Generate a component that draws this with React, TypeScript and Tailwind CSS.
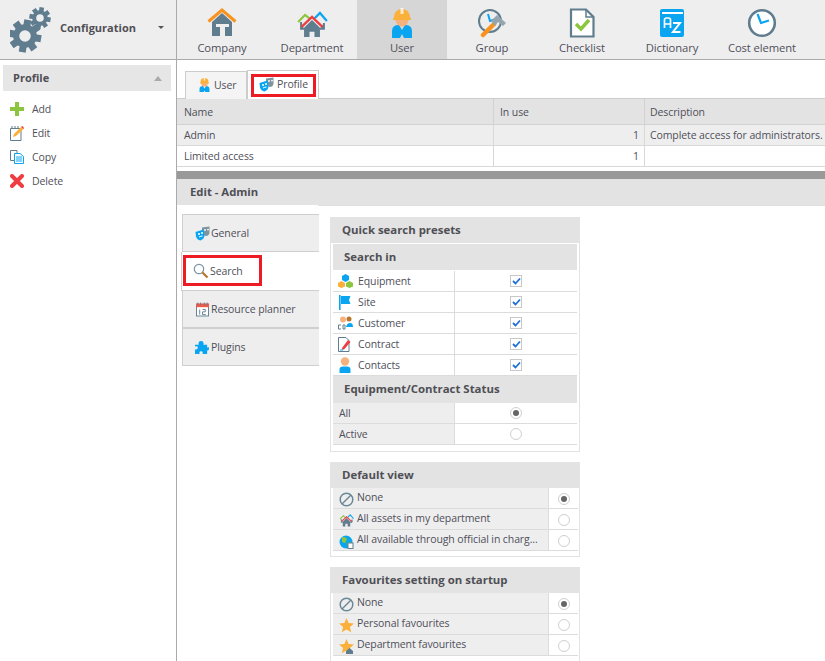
import React from "react";

const G = "#5f7d8e";
const B = "#0aa5f0";
const O = "#f7931e";

function Gear({ cx, cy, r, fill = G }: { cx: number; cy: number; r: number; fill?: string }) {
  return (
    <g>
      {[0, 45, 90, 135, 180, 225, 270, 315].map((a) => (
        <rect key={a} x={cx - r * 0.22} y={cy - r * 1.02} width={r * 0.44} height={r * 0.5} fill={fill} transform={`rotate(${a + 10} ${cx} ${cy})`} />
      ))}
      <circle cx={cx} cy={cy} r={r * 0.55} fill="none" stroke={fill} strokeWidth={r * 0.38} />
    </g>
  );
}

const I = {
  Gears: () => (
    <svg width="44" height="46" viewBox="0 0 44 46">
      <Gear cx={15} cy={29} r={16} />
      <Gear cx={30} cy={11} r={10.5} />
    </svg>
  ),
  Company: () => (
    <svg width="30" height="30" viewBox="0 0 30 30">
      <path d="M5 14 L15 5 L25 14 V28 H18 V19 H22 V16 H9 V19 H13 V28 H5 Z" fill={G} fillRule="evenodd" />
      <path d="M1.5 13.5 L15 2 L28.5 13.5" fill="none" stroke={O} strokeWidth="3" />
    </svg>
  ),
  Department: ({ s = 32 }: { s?: number }) => (
    <svg width={s} height={s * 0.9} viewBox="0 0 32 29">
      <path d="M2 13 L9 6 L14 10" fill="none" stroke="#8cc63f" strokeWidth="2.2" />
      <path d="M18 10 L24 4 L31 12" fill="none" stroke={B} strokeWidth="2.2" />
      <path d="M8 19 L16 11 L24 19 V29 H18.5 V23 H13.5 V29 H8 Z" fill={G} />
      <path d="M4 14 H5 V20 H8 M24 20 H28 V14" fill={G} stroke={G} strokeWidth="2" />
      <path d="M5.5 18 L16 8 L26.5 18" fill="none" stroke="#ef3e42" strokeWidth="2.4" />
    </svg>
  ),
  User: ({ s = 22 }: { s?: number }) => (
    <svg width={s} height={s * 1.45} viewBox="0 0 22 32">
      <path d="M1 31 V24 Q1 18 8 18 L11 23 L14 18 Q21 18 21 24 V31 H13 L11 27 L9 31 Z" fill={B} />
      <circle cx="11" cy="13" r="6.5" fill="#f5b27f" />
      <path d="M3 10 A8 8 0 0 1 19 10 V12 H3 Z" fill="#fbb03b" />
      <rect x="9.5" y="1" width="3" height="6" fill="#fff" opacity=".75" />
      <rect x="2" y="11" width="18" height="2" fill="#fbb03b" />
    </svg>
  ),
  Group: () => (
    <svg width="30" height="30" viewBox="0 0 30 30">
      <circle cx="13" cy="13" r="11" fill="none" stroke={G} strokeWidth="2" />
      <path d="M11 6 L13 13 L19 11" fill="none" stroke={B} strokeWidth="2" />
      <path d="M6 27 L17 16" stroke={O} strokeWidth="4.5" strokeLinecap="round" />
      <path d="M14 13 L20 7 L29 15 L26 18 L21 14 L18 18 Z" fill="#95a5ad" />
    </svg>
  ),
  Checklist: () => (
    <svg width="26" height="30" viewBox="0 0 26 30">
      <path d="M2 1.5 H17 L24.5 9 V28.5 H2 Z" fill="#fff" stroke={G} strokeWidth="2.2" />
      <path d="M17 1.5 V9 H24.5" fill="none" stroke={G} strokeWidth="1.5" />
      <path d="M7 16 L12 21 L20 12" fill="none" stroke="#8cc63f" strokeWidth="3.5" />
    </svg>
  ),
  Dictionary: () => (
    <svg width="24" height="28" viewBox="0 0 24 28">
      <rect width="24" height="28" rx="2" fill={B} />
      <rect x="2" y="3" width="21" height="2" fill="#fff" />
      <path d="M4.5 19 V11 Q4.5 9 6.5 9 H8.5 Q10.5 9 10.5 11 V19 M4.5 15 H10.5" fill="none" stroke="#fff" strokeWidth="1.7" />
      <path d="M13 14 H20 L13 23 H20.5" fill="none" stroke="#fff" strokeWidth="2" />
    </svg>
  ),
  Clock: () => (
    <svg width="30" height="30" viewBox="0 0 30 30">
      <circle cx="15" cy="15" r="12.8" fill="#fff" stroke={G} strokeWidth="2.6" />
      <path d="M10.5 6 L14 15 L22 12.5" fill="none" stroke={B} strokeWidth="2.2" />
    </svg>
  ),
  Plus: () => (
    <svg width="14" height="14" viewBox="0 0 14 14">
      <path d="M5 0 H9 V5 H14 V9 H9 V14 H5 V9 H0 V5 H5 Z" fill="#8cc63f" />
    </svg>
  ),
  Edit: () => (
    <svg width="14" height="15" viewBox="0 0 14 15">
      <path d="M.5 2.5 H11 V14.5 H.5 Z" fill="#fff" stroke={G} />
      <path d="M2 0 V3 M5 0 V3 M8 0 V3" stroke={G} />
      <path d="M3 11 L4 8 L11 1 L13.5 3 L6 10 Z" fill="#fbb03b" />
      <path d="M11 1 L12.5 0 L14 2 L13.5 3 Z" fill="#ef3e42" />
    </svg>
  ),
  Copy: () => (
    <svg width="14" height="14" viewBox="0 0 14 14">
      <path d="M.5 .5 H7 V10.5 H.5 Z" fill="#fff" stroke={G} />
      <path d="M4.5 3.5 H10 L13.5 6.5 V13.5 H4.5 Z" fill="#fff" stroke={B} />
      <path d="M6 7 H12 M6 9 H12 M6 11 H12" stroke={B} />
    </svg>
  ),
  Delete: () => (
    <svg width="14" height="14" viewBox="0 0 14 14">
      <path d="M2 2 L12 12 M12 2 L2 12" stroke="#ef3e42" strokeWidth="4" strokeLinecap="round" />
    </svg>
  ),
  Masks: ({ s = 15 }: { s?: number }) => (
    <svg width={s} height={s} viewBox="0 0 15 15">
      <path d="M7 1.5 L14.5 .5 V6.5 Q14 10 10.5 10 L7 8 Z" fill="#7d939f" />
      <circle cx="10" cy="4" r=".9" fill="#fff" />
      <circle cx="13" cy="3.6" r=".9" fill="#fff" />
      <path d="M.5 6 L8.5 3.5 L9.5 9 Q9.5 13 5.5 14.5 Q2 14 1 10.5 Z" fill={B} />
      <circle cx="4" cy="8" r="1" fill="#fff" />
      <circle cx="7" cy="7" r="1" fill="#fff" />
      <path d="M4 11 Q6 10 7.5 10" stroke="#fff" fill="none" />
    </svg>
  ),
  Search: () => (
    <svg width="16" height="16" viewBox="0 0 16 16">
      <circle cx="6" cy="6" r="4.7" fill="#fff" stroke="#7d939f" strokeWidth="1.2" />
      <path d="M9.5 9.5 L14.5 14.5" stroke="#b9762d" strokeWidth="2.2" />
    </svg>
  ),
  Calendar: () => (
    <svg width="13" height="15" viewBox="0 0 14 15">
      <rect x=".5" y="2" width="13" height="12.5" fill="#fff" stroke={G} />
      <rect x="0" y="1" width="14" height="4" fill="#ef5a4c" />
      <path d="M2 0 V3 M5 0 V3 M9 0 V3 M12 0 V3" stroke={G} />
      <path d="M4 7.5 V13 M7 7.5 H10 V10 H7 V13 H10.5" fill="none" stroke={G} />
    </svg>
  ),
  Puzzle: () => (
    <svg width="14" height="14" viewBox="0 0 15 15">
      <path d="M0 5 H4 Q3 1 6.5 1 Q10 1 9 5 H13 V8 Q16 7 15 10 Q14 12 13 11 V15 H8 Q9 12 6.5 12 Q4 12 5 15 H0 V10 Q3 11 3 8 Q3 6 0 7 Z" fill={B} />
    </svg>
  ),
  Equipment: () => (
    <svg width="15" height="14" viewBox="0 0 15 14">
      <path d="M7.5 0 L11 2 V6 L7.5 8 L4 6 V2 Z" fill={B} />
      <path d="M3.5 7 L7 9 V12.5 L3.5 14 L0 12.5 V9 Z" fill="#fbb03b" />
      <path d="M11.5 7 L15 9 V12.5 L11.5 14 L8 12.5 V9 Z" fill="#8cc63f" />
    </svg>
  ),
  Flag: () => (
    <svg width="12" height="15" viewBox="0 0 12 15">
      <rect x="0" y="0" width="1.6" height="15" fill={B} />
      <path d="M2 1 H11.5 L10 5 L11.5 9 H2 Z" fill={B} />
    </svg>
  ),
  Customer: () => (
    <svg width="15" height="14" viewBox="0 0 15 14">
      <circle cx="11" cy="3" r="2.5" fill="#b9762d" />
      <circle cx="5" cy="3.5" r="3" fill="#f5b27f" />
      <path d="M8 11 Q9 7 12 7 Q15 7 15 11 Z" fill={B} />
      <path d="M.5 9 H3 M.5 9 V13 H3 M5 9 H7 V13 H5 Z" fill="none" stroke={G} />
    </svg>
  ),
  Contract: () => (
    <svg width="14" height="15" viewBox="0 0 14 15">
      <path d="M.5 .5 H8 L11 3.5 V14.5 H.5 Z" fill="#fff" stroke={G} />
      <path d="M4 11 L10 3 L12.5 5 L6 12.5 L4 12.5 Z" fill="#ef3e42" />
      <path d="M2 13 H5" stroke={B} />
    </svg>
  ),
  Contact: () => (
    <svg width="12" height="16" viewBox="0 0 12 16">
      <circle cx="6" cy="4.5" r="4.2" fill="#f5b27f" />
      <path d="M.5 16 V12.5 Q.5 9.5 4 9.5 H8 Q11.5 9.5 11.5 12.5 V16 Z" fill={B} />
    </svg>
  ),
  None: () => (
    <svg width="15" height="15" viewBox="0 0 15 15">
      <circle cx="7.5" cy="7.5" r="6.3" fill="none" stroke="#6b8898" strokeWidth="1.5" />
      <path d="M3 12 L12 3" stroke="#6b8898" strokeWidth="1.5" />
    </svg>
  ),
  Globe: () => (
    <svg width="15" height="15" viewBox="0 0 15 15">
      <circle cx="7" cy="8" r="6.5" fill={B} />
      <path d="M3 3 Q7 3 8 5 L6 9 L3 8 Z M8 9 L12 8 L11 13 L9 13 Z" fill="#8cc63f" />
      <rect x="9" y="9" width="5" height="5.5" fill="#fff" stroke={G} />
    </svg>
  ),
  Star: ({ dep }: { dep?: boolean }) => (
    <svg width="15" height="15" viewBox="0 0 15 15">
      <path d="M7.5 0 L9.6 5 L15 5.4 L10.9 8.9 L12.2 14.2 L7.5 11.4 L2.8 14.2 L4.1 8.9 L0 5.4 L5.4 5 Z" fill="#fbb03b" />
      {dep && <path d="M7 12 L10.5 9 L14 12 V15 H7 Z" fill={G} />}
    </svg>
  ),
};

function Nav({ label, icon, active }: { label: string; icon: React.ReactNode; active?: boolean }) {
  return (
    <div className={`w-[90px] shrink-0 flex flex-col items-center ${active ? "bg-[#d6d6d6]" : ""}`}>
      <div className="h-[36px] mt-[5px] flex items-center justify-center">{icon}</div>
      <div className="text-[11.25px] leading-[16px] mt-[-1px] text-[#4f4f5a]">{label}</div>
    </div>
  );
}

function SideItem({ icon, label }: { icon: React.ReactNode; label: string }) {
  return (
    <div className="h-[24px] flex items-center pl-[10px] text-[#4f4f5a]">
      <span className="w-[22px] flex items-center">{icon}</span>
      <span>{label}</span>
    </div>
  );
}

function VTab({ icon, label, className = "", outlined }: { icon: React.ReactNode; label: string; className?: string; outlined?: boolean }) {
  return (
    <div className={`flex items-center pl-[11px] gap-[1px] ${className}`}>
      <span className="w-[16px] flex justify-center">{icon}</span>
      <span>{label}</span>
      {outlined && <span className="absolute left-[1px] top-[3px] w-[79px] h-[31px] border-[3px] border-[#ed1c24]" />}
    </div>
  );
}

function Check() {
  return (
    <span className="w-[12px] h-[12px] border border-[#c8c8c8] bg-white flex items-center justify-center">
      <svg width="9" height="8" viewBox="0 0 9 8">
        <path d="M1 4 L3.5 6.5 L8 1.5" fill="none" stroke="#1f6fd8" strokeWidth="1.8" />
      </svg>
    </span>
  );
}

function Radio({ on }: { on?: boolean }) {
  return (
    <span className="w-[12px] h-[12px] rounded-full border border-[#cfcfcf] bg-white flex items-center justify-center">
      {on && <span className="w-[6px] h-[6px] rounded-full bg-[#666]" />}
    </span>
  );
}

function SearchRow({ icon, label }: { icon: React.ReactNode; label: string }) {
  return (
    <div className="h-[21px] flex border-b border-[#dcdcdc] bg-white">
      <div className="w-[122px] flex items-center pl-[4px] gap-[5px] border-r border-[#dcdcdc]">
        <span className="w-[16px] flex justify-center">{icon}</span>
        <span>{label}</span>
      </div>
      <div className="flex-1 flex items-center justify-center">
        <Check />
      </div>
    </div>
  );
}

function StatusRow({ label, on }: { label: string; on?: boolean }) {
  return (
    <div className="h-[21px] flex border-b border-[#dcdcdc] bg-white">
      <div className="w-[122px] flex items-center pl-[6px] bg-[#eeeeee] border-r border-[#dcdcdc]">{label}</div>
      <div className="flex-1 flex items-center justify-center">
        <Radio on={on} />
      </div>
    </div>
  );
}

function OptRow({ icon, label, on }: { icon: React.ReactNode; label: string; on?: boolean }) {
  return (
    <div className="h-[21px] flex border-b border-[#dcdcdc] bg-white">
      <div className="w-[216px] flex items-start pl-[6px] gap-[3px] bg-[#eeeeee] border-r border-[#dcdcdc] overflow-hidden whitespace-nowrap">
        <span className="w-[15px] mt-[4px] flex justify-center shrink-0">{icon}</span>
        <span className="leading-[16px] pt-[1px]">{label}</span>
      </div>
      <div className="flex-1 flex items-center justify-center pt-[2px]">
        <Radio on={on} />
      </div>
    </div>
  );
}

const H = "font-bold tracking-normal text-[#4f4f55]";

export default function App() {
  return (
    <div
      className="w-[825px] h-[661px] overflow-hidden bg-white flex flex-col text-[10.5px] leading-[14px] tracking-[-0.1px] text-[#4f4f5a]"
      style={{ fontFamily: '"Open Sans", "Noto Sans", sans-serif' }}
    >
      <header className="h-[60px] shrink-0 flex bg-[#eeeeee] border-b border-[#aaaaaa] overflow-hidden">
        <div className="w-[177px] shrink-0 border-r border-[#aaaaaa] flex items-center pl-[10px]">
          <I.Gears />
          <span className={`ml-[6px] mt-[-4px] text-[11px] ${H}`}>Configuration</span>
          <span className="ml-[22px] mt-[-4px] w-0 h-0 border-l-[3px] border-r-[3px] border-t-[3px] border-l-transparent border-r-transparent border-t-[#555]" />
        </div>
        <Nav label="Company" icon={<I.Company />} />
        <Nav label="Department" icon={<I.Department />} />
        <Nav label="User" icon={<I.User />} active />
        <Nav label="Group" icon={<I.Group />} />
        <Nav label="Checklist" icon={<I.Checklist />} />
        <Nav label="Dictionary" icon={<I.Dictionary />} />
        <Nav label="Cost element" icon={<I.Clock />} />
      </header>

      <div className="flex-1 min-h-0 flex">
        <aside className="w-[177px] shrink-0 border-r border-[#aaaaaa] pt-[5px]">
          <div className="ml-[3px] w-[168px] h-[26px] bg-[#e6e6e6] flex items-center justify-between pl-[10px] pr-[9px]">
            <span className={`text-[11px] ${H}`}>Profile</span>
            <span className="w-0 h-0 border-l-[4px] border-r-[4px] border-b-[5px] border-l-transparent border-r-transparent border-b-[#aaa]" />
          </div>
          <div className="mt-[6px]">
            <SideItem icon={<I.Plus />} label="Add" />
            <SideItem icon={<I.Edit />} label="Edit" />
            <SideItem icon={<I.Copy />} label="Copy" />
            <SideItem icon={<I.Delete />} label="Delete" />
          </div>
        </aside>

        <main className="flex-1 min-w-0 flex flex-col">
          <div className="h-[39px] shrink-0 flex items-end pl-[8px] border-b border-[#cccccc]">
            <div className="relative top-[1px] w-[62px] h-[28px] bg-[#f4f4f4] border border-b-0 border-[#cccccc] flex items-center pl-[13px] pb-[2px] gap-[4px]">
              <I.User s={11} />
              <span>User</span>
            </div>
            <div className="relative top-[1px] w-[72px] h-[29px] bg-white border border-b-0 border-[#cccccc] flex items-center pl-[11px] pb-[2px] gap-[3px]">
              <I.Masks />
              <span>Profile</span>
              <span className="absolute left-[3px] top-[3px] w-[65px] h-[23px] border-[3px] border-[#ed1c24]" />
            </div>
          </div>

          <div className="shrink-0 overflow-hidden">
            <div className="h-[26px] flex bg-[#e3e3e3] border-b border-[#d2d2d2] items-center">
              <div className="w-[316px] shrink-0 pl-[7px]">Name</div>
              <div className="w-[151px] shrink-0 h-full flex items-center pl-[6px] border-l border-[#d2d2d2]">In use</div>
              <div className="flex-1 h-full flex items-center pl-[5px] border-l border-[#d2d2d2]">Description</div>
            </div>
            <div className="h-[21px] flex bg-[#eeeeee] border-b border-[#d8d8d8] items-center">
              <div className="w-[316px] shrink-0 pl-[7px]">Admin</div>
              <div className="w-[151px] shrink-0 h-full flex items-center justify-end pr-[5px] border-l border-[#d8d8d8]">1</div>
              <div className="flex-1 h-full flex items-center pl-[5px] border-l border-[#d8d8d8] whitespace-nowrap">Complete access for administrators.</div>
            </div>
            <div className="h-[21px] flex bg-white border-b border-[#d8d8d8] items-center">
              <div className="w-[316px] shrink-0 pl-[7px]">Limited access</div>
              <div className="w-[151px] shrink-0 h-full flex items-center justify-end pr-[5px] border-l border-[#d8d8d8]">1</div>
              <div className="flex-1 h-full border-l border-[#d8d8d8]" />
            </div>
          </div>

          <div className="h-[4px] shrink-0" />
          <div className="h-[8px] shrink-0 bg-[#999999]" />
          <div className={`h-[26px] shrink-0 bg-[#e3e3e3] flex items-center pl-[13px] text-[11.3px] ${H}`}>Edit - Admin</div>

          <div className="flex-1 min-h-0 flex overflow-hidden">
            <div className="w-[142px] shrink-0 pl-[5px] pt-[9px]">
              <VTab icon={<I.Masks />} label="General" className="h-[38px] bg-[#eeeeee] border-y border-l border-[#cfcfcf]" />
              <div className="relative h-[39px] bg-white border-b border-l border-[#cfcfcf] ml-[-1px] w-[138px]">
                <VTab icon={<I.Search />} label="Search" className="h-full" outlined />
              </div>
              <VTab icon={<I.Calendar />} label="Resource planner" className="h-[38px] bg-[#eeeeee] border-b-2 border-l border-[#cfcfcf]" />
              <VTab icon={<I.Puzzle />} label="Plugins" className="h-[37px] bg-[#eeeeee] border-b border-l border-[#cfcfcf]" />
            </div>

            <div className="flex-1 min-w-0 border-t border-[#e0e0e0] ml-[-1px] pl-[12px] pt-[11px]">
              <section className="w-[250px] border border-t-0 border-[#e3e3e3]">
                <div className={`h-[26px] bg-[#e3e3e3] flex items-center pl-[11px] text-[11.4px] ${H}`}>Quick search presets</div>
                <div className="border-[2px] border-t-[1px] border-white outline outline-[#e3e3e3] pb-[4px]">
                  <div className={`h-[26px] bg-[#e3e3e3] flex items-center pl-[11px] text-[11.4px] ${H}`}>Search in</div>
                  <div className="pt-[1px]">
                    <SearchRow icon={<I.Equipment />} label="Equipment" />
                    <SearchRow icon={<I.Flag />} label="Site" />
                    <SearchRow icon={<I.Customer />} label="Customer" />
                    <SearchRow icon={<I.Contract />} label="Contract" />
                    <SearchRow icon={<I.Contact />} label="Contacts" />
                  </div>
                  <div className={`h-[27px] bg-[#e3e3e3] flex items-center pl-[11px] pb-[2px] text-[11.4px] ${H}`}>Equipment/Contract Status</div>
                  <StatusRow label="All" on />
                  <StatusRow label="Active" />
                </div>
              </section>

              <section className="w-[250px] mt-[10px] border border-t-0 border-[#e3e3e3]">
                <div className={`h-[26px] bg-[#e3e3e3] flex items-center pl-[11px] text-[11.4px] ${H}`}>Default view</div>
                <div className="pl-[2px] pr-[1px] pb-[5px]">
                  <OptRow icon={<I.None />} label="None" on />
                  <OptRow icon={<I.Department s={15} />} label="All assets in my department" />
                  <OptRow icon={<I.Globe />} label="All available through official in charg..." />
                </div>
              </section>

              <section className="w-[250px] mt-[10px] border border-t-0 border-[#e3e3e3]">
                <div className={`h-[26px] bg-[#e3e3e3] flex items-center pl-[11px] text-[11.4px] ${H}`}>Favourites setting on startup</div>
                <div className="pl-[2px] pr-[1px] pb-[5px]">
                  <OptRow icon={<I.None />} label="None" on />
                  <OptRow icon={<I.Star />} label="Personal favourites" />
                  <OptRow icon={<I.Star dep />} label="Department favourites" />
                </div>
              </section>
            </div>
          </div>
        </main>
      </div>
    </div>
  );
}
